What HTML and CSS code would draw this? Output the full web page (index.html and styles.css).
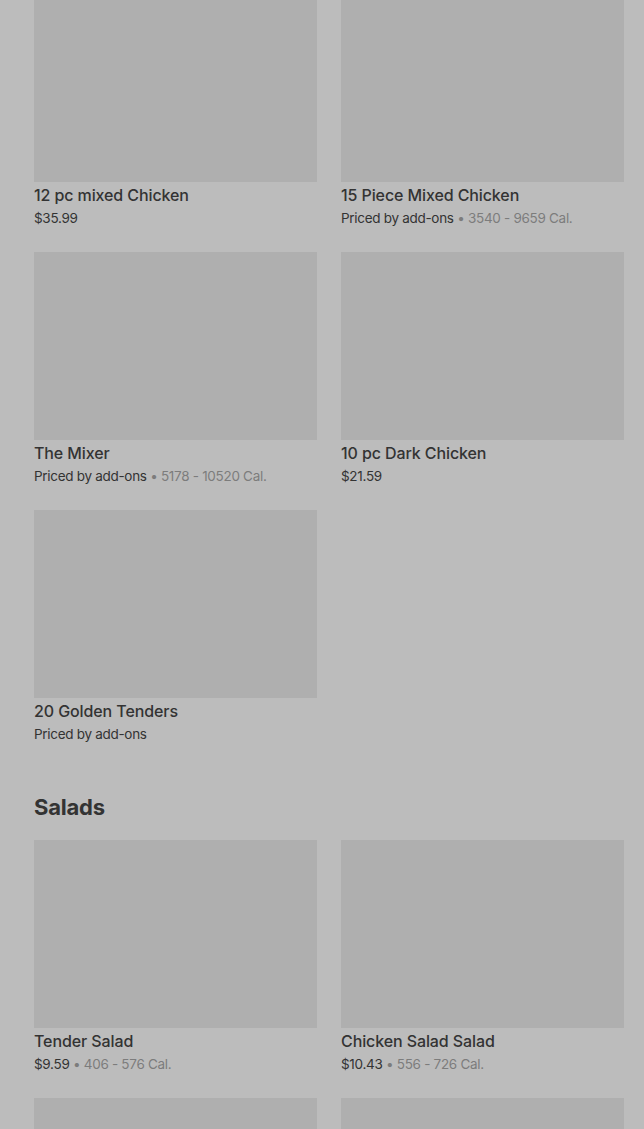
FILE: index.html
```
<!DOCTYPE html>
<html>
<head>
<meta charset="utf-8">
<link rel="stylesheet" href="styles.css">
</head>
<body>
<main class="menu">
  <section class="section first">
    <div class="grid">
      <div class="card">
        <div class="thumb"></div>
        <div class="title">12 pc mixed Chicken</div>
        <div class="meta">$35.99</div>
      </div>
      <div class="card">
        <div class="thumb"></div>
        <div class="title">15 Piece Mixed Chicken</div>
        <div class="meta">Priced by add-ons <span class="cal">• 3540 - 9659 Cal.</span></div>
      </div>
      <div class="card">
        <div class="thumb"></div>
        <div class="title">The Mixer</div>
        <div class="meta">Priced by add-ons <span class="cal">• 5178 - 10520 Cal.</span></div>
      </div>
      <div class="card">
        <div class="thumb"></div>
        <div class="title">10 pc Dark Chicken</div>
        <div class="meta">$21.59</div>
      </div>
      <div class="card">
        <div class="thumb"></div>
        <div class="title">20 Golden Tenders</div>
        <div class="meta">Priced by add-ons</div>
      </div>
    </div>
  </section>
  <section class="section">
    <h2 class="heading">Salads</h2>
    <div class="grid">
      <div class="card">
        <div class="thumb"></div>
        <div class="title">Tender Salad</div>
        <div class="meta">$9.59 <span class="cal">• 406 - 576 Cal.</span></div>
      </div>
      <div class="card">
        <div class="thumb"></div>
        <div class="title">Chicken Salad Salad</div>
        <div class="meta">$10.43 <span class="cal">• 556 - 726 Cal.</span></div>
      </div>
      <div class="card">
        <div class="thumb"></div>
      </div>
      <div class="card">
        <div class="thumb"></div>
      </div>
    </div>
  </section>
</main>
</body>
</html>
```
FILE: styles.css
```
html, body {
  margin: 0;
  padding: 0;
  background: #bcbcbc;
  overflow: hidden;
}
body {
  font-family: Inter, "Liberation Sans", sans-serif;
  color: #333333;
}
.menu {
  padding: 0 20px 0 34px;
  margin-top: -6px;
}
.section.first {
  padding-bottom: 24px;
}
.heading {
  margin: 23px 0 17px;
  font-size: 22px;
  line-height: 32px;
  font-weight: 700;
  color: #333333;
  letter-spacing: -0.2px;
}
.grid {
  display: grid;
  grid-template-columns: 283px 283px;
  column-gap: 24px;
  row-gap: 24px;
}
.thumb {
  height: 188px;
  background: #afafaf;
}
.title {
  margin-top: 3px;
  font-size: 16px;
  line-height: 20px;
  font-weight: 500;
  color: #333333;
  letter-spacing: -0.1px;
}
.meta {
  margin-top: 3px;
  font-size: 13.5px;
  line-height: 20px;
  color: #333333;
  letter-spacing: -0.3px;
}
.cal {
  color: #7c7c7c;
}
```
